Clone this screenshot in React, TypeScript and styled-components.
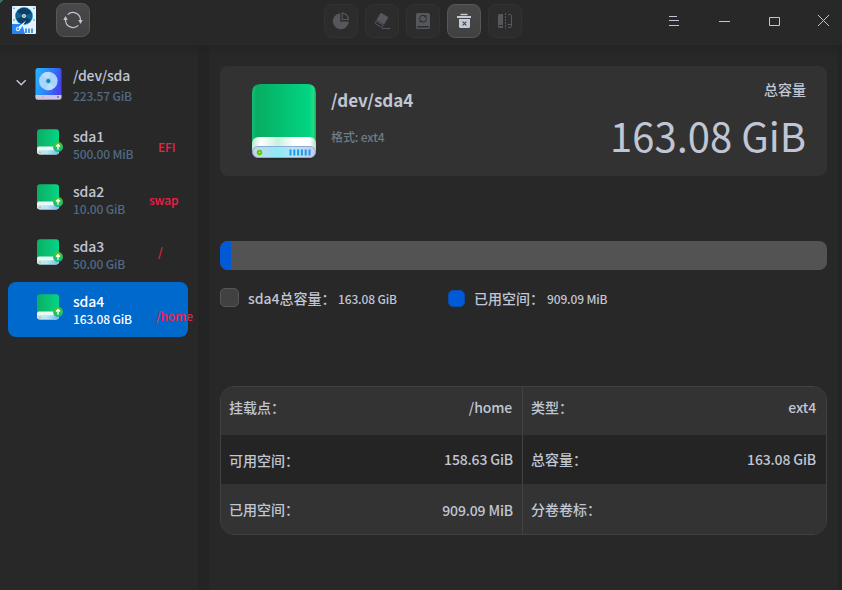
import React from "react";
import styled, { createGlobalStyle } from "styled-components";

const GlobalStyle = createGlobalStyle`
  * { box-sizing: border-box; }
  body {
    margin: 0;
    background: #232323;
    font-family: "Noto Sans CJK SC", "Noto Sans", sans-serif;
    font-weight: 500;
    color: #c0c6d4;
  }
  svg { display: block; }
`;

const Window = styled.div`
  width: 842px;
  height: 590px;
  display: flex;
  flex-direction: column;
  overflow: hidden;
  background: linear-gradient(135deg, #3c7566 0, #3c7566 2px, #232323 3px);
`;

const TitleBar = styled.header`
  height: 45px;
  flex: none;
  display: grid;
  grid-template-columns: 324px 345px 1fr;
  align-items: start;
  background: #282828;
  border-top-left-radius: 6px;
`;

const TitleLeft = styled.div`
  display: flex;
  gap: 20px;
  padding: 3px 0 0 12px;
`;

const LogoSlot = styled.div`
  padding-top: 3px;
`;

const ToolGroup = styled.div`
  display: flex;
  gap: 7px;
  padding-top: 4px;
`;

const ToolButton = styled.button<{ $active?: boolean }>`
  width: 34px;
  height: 34px;
  padding: 0;
  display: flex;
  align-items: center;
  justify-content: center;
  border-radius: 8px;
  border: 1px solid ${(p) => (p.$active ? "#575757" : "#323232")};
  background: ${(p) => (p.$active ? "linear-gradient(#484848, #414141)" : "#2c2c2c")};
  color: ${(p) => (p.$active ? "#c5cad8" : "#55575c")};
`;

const WindowControls = styled.div`
  display: flex;
  gap: 38px;
  padding-top: 14px;
  color: #c0c6d4;
`;

const Body = styled.div`
  flex: 1;
  display: flex;
  gap: 11px;
  padding-right: 4px;
  background: linear-gradient(#222222, #242424 10px, #242424);
`;

const Sidebar = styled.nav`
  width: 198px;
  padding: 7px 10px 0 8px;
  background: linear-gradient(#242424, #282828 14px);
`;

const DeviceRow = styled.div<{ $root?: boolean; $selected?: boolean }>`
  position: relative;
  height: ${(p) => (p.$root ? 65 : 55)}px;
  display: flex;
  align-items: flex-start;
  padding-top: ${(p) => (p.$root ? 14 : 10)}px;
  border-radius: 8px;
  background: ${(p) => (p.$selected ? "#0069cc" : "transparent")};
  color: ${(p) => (p.$selected ? "#ffffff" : "#c0c6d4")};
`;

const Expander = styled.div`
  width: 27px;
  padding: 13px 0 0 8px;
`;

const DeviceIcon = styled.div<{ $root?: boolean }>`
  width: ${(p) => (p.$root ? 38 : 37)}px;
  margin-left: ${(p) => (p.$root ? 0 : 28)}px;
  padding-top: ${(p) => (p.$root ? 1 : 0)}px;
`;

const DeviceText = styled.div`
  display: flex;
  flex-direction: column;
`;

const DeviceName = styled.span`
  font-size: 14px;
  line-height: 18px;
  letter-spacing: -0.12px;
`;

const DeviceSize = styled.span<{ $root?: boolean; $selected?: boolean }>`
  margin-top: ${(p) => (p.$root ? 3 : 0)}px;
  font-size: 12px;
  line-height: 18px;
  letter-spacing: -0.15px;
  color: ${(p) => (p.$selected ? "#ffffff" : "#526a84")};
`;

const MountTag = styled.span<{ $left: number; $top: number }>`
  position: absolute;
  left: ${(p) => p.$left}px;
  top: ${(p) => p.$top}px;
  font-size: 12px;
  line-height: 18px;
  letter-spacing: -0.15px;
  color: #f21f46;
`;

const Main = styled.main`
  flex: 1;
  display: flex;
  flex-direction: column;
  padding: 21px 11px 0;
  background: linear-gradient(#242424, #282828 14px);
`;

const SummaryCard = styled.section`
  height: 110px;
  flex: none;
  display: flex;
  padding: 0 21px 0 31px;
  border-radius: 8px;
  background: #323232;
`;

const SummaryIcon = styled.div`
  width: 80px;
  padding-top: 17px;
`;

const SummaryInfo = styled.div`
  flex: 1;
  padding-top: 21px;
`;

const SummaryName = styled.h1`
  margin: 0;
  font-size: 17px;
  line-height: 26px;
  font-weight: 700;
`;

const SummaryFormat = styled.p`
  margin: 15px 0 0;
  font-size: 12px;
  line-height: 18px;
  letter-spacing: -0.12px;
  color: #6d7c88;
`;

const Capacity = styled.div`
  display: flex;
  flex-direction: column;
  align-items: flex-end;
  padding-top: 13px;
`;

const CapacityLabel = styled.span`
  font-size: 14px;
  line-height: 20px;
`;

const CapacityValue = styled.span`
  margin-top: 11px;
  font-size: 40px;
  line-height: 50px;
  font-weight: 400;
  white-space: nowrap;
`;

const UsageBar = styled.div`
  height: 29px;
  flex: none;
  margin-top: 65px;
  border-radius: 8px;
  overflow: hidden;
  background: #535353;
`;

const UsageFill = styled.div`
  width: 11px;
  height: 100%;
  background: #0059d6;
`;

const Legend = styled.div`
  display: flex;
  margin-top: 17px;
  height: 22px;
`;

const LegendItem = styled.div<{ $width: number }>`
  width: ${(p) => p.$width}px;
  display: flex;
  align-items: flex-start;
`;

const Swatch = styled.span<{ $used?: boolean }>`
  width: ${(p) => (p.$used ? 17 : 19)}px;
  height: ${(p) => (p.$used ? 17 : 19)}px;
  margin-top: ${(p) => (p.$used ? 3 : 1)}px;
  border-radius: 5px;
  border: 1px solid ${(p) => (p.$used ? "#064fae" : "#575757")};
  background: ${(p) => (p.$used ? "#0059d6" : "#414141")};
`;

const LegendLabel = styled.span`
  width: 90px;
  margin-left: 9px;
  font-size: 14px;
  line-height: 22px;
  white-space: nowrap;
`;

const UsedLabel = styled(LegendLabel)`
  width: 73px;
`;

const LegendValue = styled.span`
  margin-top: 1px;
  font-size: 12px;
  line-height: 22px;
  letter-spacing: -0.15px;
  white-space: nowrap;
`;

const DetailTable = styled.section`
  width: 607px;
  margin-top: 77px;
  border: 1px solid #414141;
  border-radius: 14px;
  overflow: hidden;
`;

const DetailRow = styled.div<{ $dark?: boolean; $height: number }>`
  display: grid;
  grid-template-columns: 302px 1fr;
  height: ${(p) => p.$height}px;
  background: ${(p) => (p.$dark ? "#242424" : "#333333")};
`;

const DetailCell = styled.div<{ $top: number; $valueTop: number; $right: number }>`
  display: flex;
  justify-content: space-between;
  padding: ${(p) => p.$top}px ${(p) => p.$right}px 0 8px;
  font-size: 14px;
  line-height: 20px;
  &:first-child { border-right: 1px solid #424242; }
  & > :last-child {
    margin-top: ${(p) => p.$valueTop - p.$top}px;
    letter-spacing: -0.15px;
  }
`;

const Logo = () => (
  <svg width="24" height="28" viewBox="0 0 24 28">
    <rect width="24" height="28" rx="1" fill="#e6f3fc" />
    <path d="M0 18h10l3 10H0z" fill="#2586f5" />
    <circle cx="12" cy="10" r="9" fill="#22a3ef" />
    <circle cx="12" cy="10" r="8.2" fill="#0d3f66" />
    <path d="M12 10L4.400 13A8.200 8.200 0 0 1 5 5.800z" fill="#176b98" opacity=".8" />
    <path d="M12 10l7.500-3a8.200 8.200 0 0 1-.6 7z" fill="#176b98" opacity=".8" />
    <circle cx="12" cy="10" r="2" fill="#dfe9ef" />
    <circle cx="12" cy="10" r=".8" fill="#4d5c68" />
    <path d="M14 14.500L7.500 20 4.500 24.500l2.500.3L9.500 21.500z" fill="#fff" />
    <circle cx="6" cy="23" r="1.800" fill="#4aa0f7" stroke="#e4f3ff" />
    <path d="M14 22.500v4.500M17 22.500v4.500M20 22.500v4.500" stroke="#338fe8" strokeWidth="1.800" />
    <circle cx="22" cy="2.300" r=".8" fill="#2586f5" />
    <circle cx="22" cy="14" r=".8" fill="#2586f5" />
    <circle cx="2" cy="2.300" r=".8" fill="#2586f5" />
    <circle cx="2" cy="14" r=".8" fill="#2586f5" />
  </svg>
);

const RefreshIcon = () => (
  <svg width="20" height="20" viewBox="0 0 20 20" fill="none" stroke="#c0c6d4" strokeWidth="1.200">
    <path d="M4.700 4.700A7.500 7.500 0 0 1 17.500 10v1" />
    <path d="M15.300 15.300A7.500 7.500 0 0 1 2.500 10V9" />
    <path d="M.3 10l2.200-4 2.200 4z" fill="#c0c6d4" stroke="none" />
    <path d="M15.300 10l2.200 4 2.200-4z" fill="#c0c6d4" stroke="none" />
  </svg>
);

const PartitionIcon = () => (
  <svg width="18" height="18" viewBox="0 0 18 18">
    <path d="M8.200 1.300A8 8 0 1 0 16.800 9.500H8.200z" fill="currentColor" />
    <path d="M10.200 1.200v6.300h6.200a7 7 0 0 0-6.200-6.300z" fill="none" stroke="currentColor" strokeWidth="1.200" />
  </svg>
);

const EraserIcon = () => (
  <svg width="18" height="18" viewBox="0 0 18 18">
    <path d="M8.400 1.100l6.300 3.600q.8.500.4 1.300l-4 6.600-7.700-4.500 3.900-6.700q.4-.8 1.100-.3z" fill="currentColor" />
    <path d="M3.300 9l7.100 4.200-1 1.600q-.5.800-1.300.3l-5.300-3.100q-.8-.5-.4-1.200z" fill="none" stroke="currentColor" />
    <path d="M9 16.500h8.500" stroke="currentColor" />
  </svg>
);

const MountIcon = () => (
  <svg width="18" height="18" viewBox="0 0 18 18">
    <path
      fillRule="evenodd"
      d="M3.500 1h11q1.500 0 1.500 1.500v13q0 1.500-1.500 1.500h-11Q2 17 2 15.500v-13Q2 1 3.500 1zM3.200 14v1.600h11.600V14z"
      fill="currentColor"
    />
    <circle cx="9" cy="6.700" r="3.400" fill="none" stroke="#2b2b2b" strokeWidth="1" />
    <path d="M5.500 9.700L8 9M12.500 3.800L10 4.500" stroke="#2b2b2b" />
  </svg>
);

const TrashIcon = () => (
  <svg width="18" height="18" viewBox="0 0 18 18">
    <path d="M5.500 2.500h7" stroke="currentColor" strokeWidth="1.500" />
    <path d="M2 5h14" stroke="currentColor" strokeWidth="2" />
    <path d="M4 7h11v7.500q0 1.500-1.500 1.500h-8Q4 16 4 14.500z" fill="currentColor" />
    <path d="M7.600 9.600l3.800 3.800M11.400 9.600l-3.800 3.800" stroke="#454545" strokeWidth="1.100" />
  </svg>
);

const ResizeIcon = () => (
  <svg width="18" height="18" viewBox="0 0 18 18">
    <path d="M3.500 2H7v14H3.500Q2 16 2 14.500v-11Q2 2 3.500 2z" fill="currentColor" />
    <path d="M3 13.500h4" stroke="#2b2b2b" />
    <path d="M9.500 1v16" stroke="currentColor" strokeDasharray="2 1" />
    <path d="M12 2.500h2q1.500 0 1.500 1.500v10q0 1.500-1.500 1.500h-2M11.500 12.500h4" fill="none" stroke="currentColor" />
  </svg>
);

const MenuGlyph = () => (
  <svg width="12" height="14" viewBox="0 0 12 14" stroke="currentColor">
    <path d="M0 2.500h8M0 6.500h10M0 11.500h10" />
  </svg>
);
const MinimizeGlyph = () => (
  <svg width="12" height="14" viewBox="0 0 12 14" stroke="currentColor">
    <path d="M0 7.500h11" />
  </svg>
);
const MaximizeGlyph = () => (
  <svg width="12" height="14" viewBox="0 0 12 14" stroke="currentColor" fill="none">
    <path d="M.5 3.500h10v8H.5z" />
  </svg>
);
const CloseGlyph = () => (
  <svg width="12" height="14" viewBox="0 0 12 14" stroke="currentColor" overflow="visible">
    <path d="M-1 1l11 11M10 1L-1 12" />
  </svg>
);

const Chevron = () => (
  <svg width="11" height="8" viewBox="0 0 11 8" fill="none">
    <path d="M.7 1.300l4.500 4.500L9.700 1.300" stroke="#c0c6d4" strokeWidth="1.500" />
  </svg>
);

const DiskIcon = () => (
  <svg width="27" height="34" viewBox="0 0 27 34">
    <defs>
      <linearGradient id="diskBody" x1="0" x2="1" y1="0" y2=".3">
        <stop offset="0" stopColor="#25b8ff" />
        <stop offset=".55" stopColor="#2c83fa" />
        <stop offset="1" stopColor="#4545f0" />
      </linearGradient>
    </defs>
    <rect x=".5" y="1" width="26" height="32" rx="2.500" fill="url(#diskBody)" />
    <path d="M.5 28h26v2q0 2.500-2.500 2.500H3Q.5 32.500.5 30z" fill="#cbc5ee" />
    <circle cx="13.300" cy="14" r="9.300" fill="#a9d4fb" />
    <path d="M13.300 14L7 7.200A9.300 9.300 0 0 1 15 4.900zM13.300 14l6.300 6.800a9.300 9.300 0 0 1-8 2.300z" fill="#c9e4fd" opacity=".6" />
    <circle cx="13.300" cy="14" r="3" fill="#8fcaf0" />
    <circle cx="13.300" cy="14" r="2" fill="#078aad" />
    <circle cx="3.700" cy="30" r="1" fill="#b9d98b" />
    <path d="M7 30h2" stroke="#f09fbd" strokeWidth="2" />
    <circle cx="23" cy="30" r="1" fill="#77719a" />
  </svg>
);

const VolumeIcon = () => (
  <svg width="27" height="29" viewBox="0 0 27 29">
    <defs>
      <linearGradient id="volBody">
        <stop offset="0" stopColor="#0bae62" />
        <stop offset="1" stopColor="#04d588" />
      </linearGradient>
      <linearGradient id="volBase">
        <stop offset="0" stopColor="#d4dcea" />
        <stop offset=".45" stopColor="#b4e8f5" />
        <stop offset="1" stopColor="#77b7f1" />
      </linearGradient>
      <linearGradient id="volBadge" x1="0" x2="0" y1="0" y2="1">
        <stop offset="0" stopColor="#55c517" />
        <stop offset="1" stopColor="#07bd8b" />
      </linearGradient>
    </defs>
    <rect x="1" y="2.200" width="22" height="25" rx="3" fill="url(#volBody)" />
    <path d="M1 21.500q0-2 2-2h18q2 0 2 2v3q0 3-3 3H4q-3 0-3-3z" fill="#ecf8f3" />
    <path d="M1.300 23.200h21.400v1.200q0 2.900-3 2.900H4.300q-3 0-3-2.900z" fill="url(#volBase)" />
    <circle cx="4" cy="25.300" r=".9" fill="#98d35d" />
    <circle cx="22" cy="20" r="5" fill="url(#volBadge)" />
    <path d="M22 22.800v-5M20 19.500l2-2 2 2" stroke="#fff" strokeWidth="1.300" fill="none" />
  </svg>
);

const LargeVolumeIcon = () => (
  <svg width="66" height="78" viewBox="0 0 66 78">
    <defs>
      <linearGradient id="bigBody">
        <stop offset="0" stopColor="#14bd77" />
        <stop offset=".07" stopColor="#08ad61" />
        <stop offset=".9" stopColor="#01d583" />
        <stop offset=".96" stopColor="#22dd82" />
        <stop offset="1" stopColor="#10ad68" />
      </linearGradient>
      <linearGradient id="bigRim">
        <stop offset="0" stopColor="#b5ecd0" />
        <stop offset=".14" stopColor="#fff" />
        <stop offset=".4" stopColor="#c8f1df" />
        <stop offset=".66" stopColor="#fff" />
        <stop offset=".9" stopColor="#fff" />
        <stop offset="1" stopColor="#a5e5c5" />
      </linearGradient>
      <linearGradient id="bigBase">
        <stop offset="0" stopColor="#d1cfea" />
        <stop offset=".4" stopColor="#8cebf6" />
        <stop offset=".65" stopColor="#b9e2f5" />
        <stop offset="1" stopColor="#cec9e9" />
      </linearGradient>
    </defs>
    <rect x="1.500" y="3" width="63.500" height="74" rx="9" fill="#202022" opacity=".5" />
    <path d="M1 10q0-9 9-9h46q9 0 9 9v55H1z" fill="url(#bigBody)" />
    <path d="M1 61q0-7 7-7h50q7 0 7 7v7H1z" fill="url(#bigRim)" />
    <rect x="1.500" y="63.500" width="63" height="11" rx="5.500" fill="url(#bigBase)" stroke="#8eaad6" />
    <circle cx="8.500" cy="69.500" r="2.700" fill="#55c80c" />
    <circle cx="8.500" cy="69.500" r="1" fill="#a1ed43" />
    <path d="M39.500 66.500v6M43.300 66.500v6M47.100 66.500v6M50.900 66.500v6M54.700 66.500v6M58.500 66.500v6" stroke="#169cf0" strokeWidth="2" />
  </svg>
);

const tools = [
  { id: "partition", icon: <PartitionIcon /> },
  { id: "format", icon: <EraserIcon /> },
  { id: "mount", icon: <MountIcon /> },
  { id: "unmount", icon: <TrashIcon />, active: true },
  { id: "resize", icon: <ResizeIcon /> },
];

const volumes = [
  { name: "sda1", size: "500.00 MiB", tag: "EFI", left: 150, top: 21 },
  { name: "sda2", size: "10.00 GiB", tag: "swap", left: 141, top: 19 },
  { name: "sda3", size: "50.00 GiB", tag: "/", left: 150, top: 16 },
  { name: "sda4", size: "163.08 GiB", tag: "/home", left: 148, top: 25, selected: true },
];

export default function App() {
  return (
    <>
      <GlobalStyle />
      <Window>
        <TitleBar>
          <TitleLeft>
            <LogoSlot><Logo /></LogoSlot>
            <ToolButton $active aria-label="refresh"><RefreshIcon /></ToolButton>
          </TitleLeft>
          <ToolGroup>
            {tools.map((t) => (
              <ToolButton key={t.id} $active={t.active} aria-label={t.id}>{t.icon}</ToolButton>
            ))}
          </ToolGroup>
          <WindowControls>
            <MenuGlyph />
            <MinimizeGlyph />
            <MaximizeGlyph />
            <CloseGlyph />
          </WindowControls>
        </TitleBar>
        <Body>
          <Sidebar>
            <DeviceRow $root>
              <Expander><Chevron /></Expander>
              <DeviceIcon $root><DiskIcon /></DeviceIcon>
              <DeviceText>
                <DeviceName>/dev/sda</DeviceName>
                <DeviceSize $root>223.57 GiB</DeviceSize>
              </DeviceText>
            </DeviceRow>
            {volumes.map((v) => (
              <DeviceRow key={v.name} $selected={v.selected}>
                <DeviceIcon><VolumeIcon /></DeviceIcon>
                <DeviceText>
                  <DeviceName>{v.name}</DeviceName>
                  <DeviceSize $selected={v.selected}>{v.size}</DeviceSize>
                </DeviceText>
                <MountTag $left={v.left} $top={v.top}>{v.tag}</MountTag>
              </DeviceRow>
            ))}
          </Sidebar>
          <Main>
            <SummaryCard>
              <SummaryIcon><LargeVolumeIcon /></SummaryIcon>
              <SummaryInfo>
                <SummaryName>/dev/sda4</SummaryName>
                <SummaryFormat>格式: ext4</SummaryFormat>
              </SummaryInfo>
              <Capacity>
                <CapacityLabel>总容量</CapacityLabel>
                <CapacityValue>163.08 GiB</CapacityValue>
              </Capacity>
            </SummaryCard>
            <UsageBar><UsageFill /></UsageBar>
            <Legend>
              <LegendItem $width={228}>
                <Swatch />
                <LegendLabel>sda4总容量：</LegendLabel>
                <LegendValue>163.08 GiB</LegendValue>
              </LegendItem>
              <LegendItem $width={200}>
                <Swatch $used />
                <UsedLabel>已用空间：</UsedLabel>
                <LegendValue>909.09 MiB</LegendValue>
              </LegendItem>
            </Legend>
            <DetailTable>
              <DetailRow $height={48}>
                <DetailCell $top={10} $valueTop={10} $right={10}><span>挂载点：</span><span>/home</span></DetailCell>
                <DetailCell $top={10} $valueTop={10} $right={10}><span>类型：</span><span>ext4</span></DetailCell>
              </DetailRow>
              <DetailRow $dark $height={49}>
                <DetailCell $top={15} $valueTop={14} $right={9}><span>可用空间：</span><span>158.63 GiB</span></DetailCell>
                <DetailCell $top={14} $valueTop={14} $right={10}><span>总容量：</span><span>163.08 GiB</span></DetailCell>
              </DetailRow>
              <DetailRow $height={50}>
                <DetailCell $top={15} $valueTop={16} $right={9}><span>已用空间：</span><span>909.09 MiB</span></DetailCell>
                <DetailCell $top={15} $valueTop={15} $right={10}><span>分卷卷标：</span><span /></DetailCell>
              </DetailRow>
            </DetailTable>
          </Main>
        </Body>
      </Window>
    </>
  );
}
